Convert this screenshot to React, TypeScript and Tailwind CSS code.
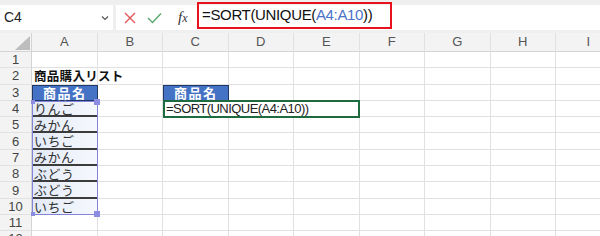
import React from 'react';

const COLS = ['A', 'B', 'C', 'D', 'E', 'F', 'G', 'H', 'I'];
const ROWS = [1, 2, 3, 4, 5, 6, 7, 8, 9, 10, 11, 12];

const LIST: Record<number, string> = {
  4: 'りんご',
  5: 'みかん',
  6: 'いちご',
  7: 'みかん',
  8: 'ぶどう',
  9: 'ぶどう',
  10: 'いちご',
};

const jp = "font-['Noto_Sans_CJK_JP',sans-serif]";

const FormulaBar: React.FC = () => (
  <div className="relative flex h-[33px] bg-[#efefef] pt-[5px]">
    <div className="flex h-[25px] w-[113px] items-center justify-between bg-white pl-[4px] pr-[4px]">
      <span className="font-['Liberation_Sans',sans-serif] text-[14px] text-[#222]">C4</span>
      <svg width="8" height="6" viewBox="0 0 8 6" className="mt-[1px]">
        <path d="M1 1.5 L4 4.5 L7 1.5" fill="none" stroke="#555" strokeWidth="1.2" />
      </svg>
    </div>
    <div className="ml-[3px] flex h-[25px] flex-1 items-center bg-white">
      <div className="flex w-[80px] items-center">
        <svg width="12" height="12" viewBox="0 0 12 12" className="ml-[8px]">
          <path d="M1 1 L11 11 M11 1 L1 11" stroke="#e0565b" strokeWidth="1.4" />
        </svg>
        <svg width="15" height="12" viewBox="0 0 15 12" className="ml-[11px]">
          <path d="M1 6 L5.5 10.5 L14 1.5" fill="none" stroke="#5aa86b" strokeWidth="1.4" />
        </svg>
        <span className="ml-[16px] font-['Liberation_Serif',serif] text-[15px] italic text-[#333]">
          f<span className="text-[12px]">x</span>
        </span>
      </div>
      <div className="-mt-[5px] ml-[1px] flex h-[27px] w-[195px] items-center border-[2.5px] border-[#e8121e] pl-[3px] font-['Liberation_Sans',sans-serif] text-[15px] tracking-[-0.35px] text-[#111]">
        =SORT(UNIQUE(<span className="text-[#4a72c8]">A4:A10</span>))
      </div>
    </div>
  </div>
);

const Handle: React.FC<{ className: string }> = ({ className }) => (
  <div className={`absolute bg-[#8c8ce0] ${className}`} />
);

const renderCell = (row: number, col: string) => {
  const base = 'relative border-r border-b border-[#e1e1e1]';
  if (col === 'A' && row === 2) {
    return (
      <div className={base}>
        <span className={`absolute left-[2px] top-[2px] z-10 whitespace-nowrap ${jp} text-[12.5px] leading-none font-bold tracking-[0.3px] text-[#111]`}>
          商品購入リスト
        </span>
      </div>
    );
  }
  if ((col === 'A' || col === 'C') && row === 3) {
    return (
      <div className={`relative flex items-center justify-center border border-[#1f3864] bg-[#4472c4] ${jp} text-[13px] leading-none font-bold tracking-[1.5px] text-white`}>
        商品名
      </div>
    );
  }
  if (col === 'A' && LIST[row]) {
    return (
      <div
        className={`flex items-center bg-linear-to-r from-[#e3eaf7] to-[#f6f8fd] pl-[2px] ${jp} text-[13px] leading-none tracking-[0.5px] text-[#333] ${
          row < 10 ? 'border-b-2 border-b-[#3c3c3c]' : ''
        }`}
      >
        {LIST[row]}
      </div>
    );
  }
  return <div className={base} />;
};

const App: React.FC = () => {
  return (
    <div className="h-[236px] w-[600px] overflow-hidden bg-white">
      <FormulaBar />
      <div className="relative grid grid-cols-[32px_repeat(9,65.5px)] grid-rows-[19px_repeat(12,16.3px)]">
        <div className="relative border-r border-b border-[#d4d4d4] bg-[#f3f3f3]">
          <svg width="32" height="19" viewBox="0 0 32 19" className="absolute left-0 top-0">
            <path d="M15 17 L30 17 L30 3 Z" fill="#bdbdbd" />
          </svg>
        </div>
        {COLS.map((c) => (
          <div
            key={c}
            className="flex items-center justify-center border-r border-b border-r-[#e1e1e1] border-b-[#d4d4d4] bg-[#f3f3f3] font-['Liberation_Sans',sans-serif] text-[13px] text-[#555]"
          >
            {c}
          </div>
        ))}
        {ROWS.map((r) => (
          <React.Fragment key={r}>
            <div className="flex items-center justify-center border-r border-b border-r-[#d4d4d4] border-b-[#e1e1e1] bg-[#f3f3f3] font-['Liberation_Sans',sans-serif] text-[13px] leading-none text-[#444]">
              {r}
            </div>
            {COLS.map((c) => (
              <React.Fragment key={c}>{renderCell(r, c)}</React.Fragment>
            ))}
          </React.Fragment>
        ))}

        {/* reference range A4:A10 */}
        <div className="pointer-events-none absolute inset-0 z-20 [grid-column:2/3] [grid-row:5/12] border-[1.5px] border-[#8383dc]">
          <Handle className="-left-[2px] -top-[2px] h-[4px] w-[4px]" />
          <Handle className="-right-[3px] -top-[3px] h-[6px] w-[6px]" />
          <Handle className="-bottom-[2px] -left-[2px] h-[4px] w-[4px]" />
          <Handle className="-bottom-[3px] -right-[3px] h-[6px] w-[6px]" />
        </div>

        {/* in-cell editor on C4 */}
        <div className="absolute inset-0 z-20 [grid-column:4/7] [grid-row:5/6] -mt-[1px] flex h-[18px] items-center border-2 border-[#1e6b40] bg-white pl-[1px] font-['Liberation_Sans',sans-serif] text-[13px] leading-none tracking-[-0.55px] text-[#222]">
          =SORT(UNIQUE(A4:A10))
        </div>
      </div>
    </div>
  );
};

export default App;
